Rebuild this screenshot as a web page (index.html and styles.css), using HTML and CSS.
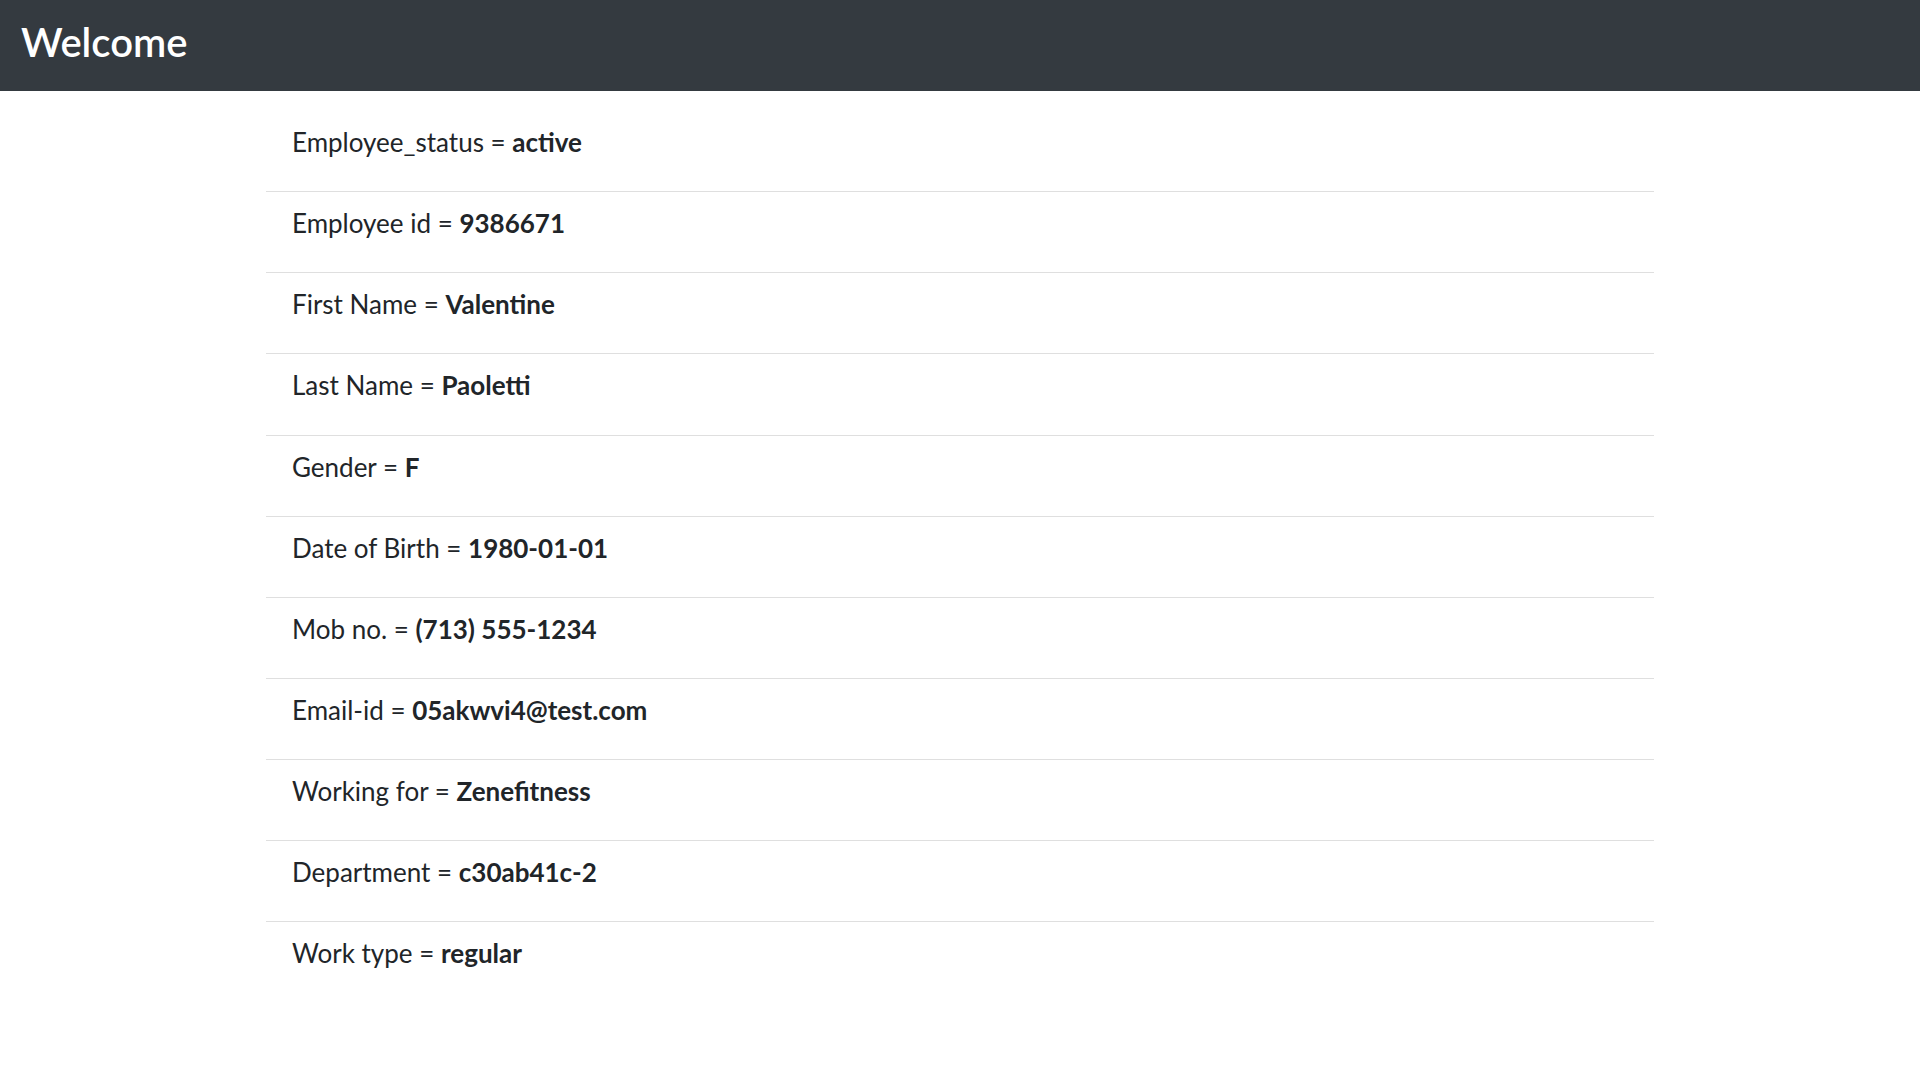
FILE: index.html
```html
<!DOCTYPE html>
<html lang="en">
<head>
<meta charset="utf-8">
<title>Welcome</title>
<link rel="stylesheet" href="styles.css">
</head>
<body>
<header class="navbar">
  <h1 class="brand">Welcome</h1>
</header>
<main class="container">
  <ul class="details">
    <li class="item">Employee_status = <b>active</b></li>
    <li class="item">Employee id = <b>9386671</b></li>
    <li class="item">First Name = <b>Valentine</b></li>
    <li class="item">Last Name = <b>Paoletti</b></li>
    <li class="item">Gender = <b>F</b></li>
    <li class="item">Date of Birth = <b>1980-01-01</b></li>
    <li class="item">Mob no. = <b>(713) 555-1234</b></li>
    <li class="item">Email-id = <b>05akwvi4@test.com</b></li>
    <li class="item">Working for = <b>Zenefitness</b></li>
    <li class="item">Department = <b>c30ab41c-2</b></li>
    <li class="item">Work type = <b>regular</b></li>
  </ul>
</main>
</body>
</html>
```
FILE: styles.css
```css
* { box-sizing: border-box; }
html, body {
  margin: 0;
  padding: 0;
  background: #ffffff;
  font-family: "Lato", "Noto Sans", sans-serif;
  color: #212529;
}
.navbar {
  height: 91px;
  background: #343a40;
  display: flex;
  align-items: center;
  padding: 0 21px 8px;
}
.brand {
  margin: 0;
  color: #ffffff;
  font-size: 40px;
  font-weight: 600;
  line-height: 1.2;
}
.container {
  width: 1388px;
  margin: 20px auto 0;
}
.details {
  list-style: none;
  margin: 0;
  padding: 0;
}
.item {
  height: 81.15px;
  padding: 14px 26px 0;
  font-size: 26px;
  line-height: 34px;
  border-bottom: 1px solid #dfdfdf;
}
.item:last-child { border-bottom: none; }
.item b { font-weight: 700; }
```
